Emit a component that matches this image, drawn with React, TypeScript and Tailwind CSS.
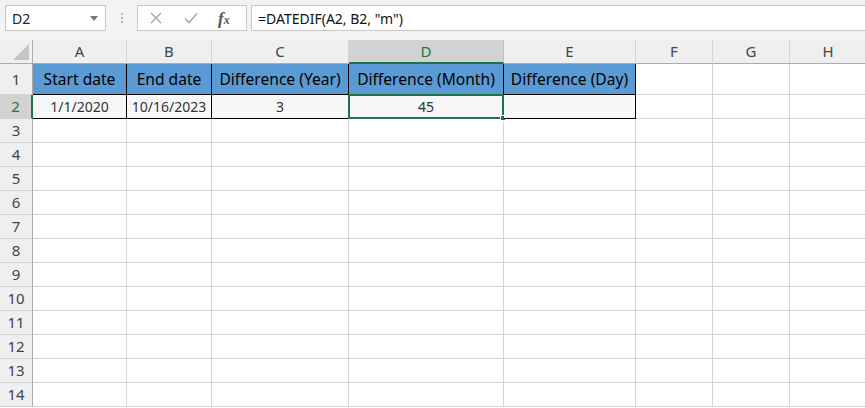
import React from "react";

const cols = [
  { id: "A", w: "w-[94px]" },
  { id: "B", w: "w-[85px]" },
  { id: "C", w: "w-[137px]" },
  { id: "D", w: "w-[155px]" },
  { id: "E", w: "w-[132px]" },
  { id: "F", w: "w-[77px]" },
  { id: "G", w: "w-[77px]" },
  { id: "H", w: "w-[77px]" },
];

const headers = [
  "Start date",
  "End date",
  "Difference (Year)",
  "Difference (Month)",
  "Difference (Day)",
];
const values = ["1/1/2020", "10/16/2023", "3", "45", ""];

const font = { fontFamily: '"Noto Sans", "Open Sans", sans-serif' };

function RowHeader({ n, h, selected }: { n: number; h: string; selected?: boolean }) {
  return (
    <div
      className={`${h} w-[33px] shrink-0 flex items-center justify-center text-[15px] border-b border-[#d4d4d4] ${
        selected
          ? "bg-[#d2d2d2] text-[#217346] border-r-2 border-r-[#217346]"
          : "bg-[#efefef] text-[#444] border-r border-r-[#ababab]"
      }`}
    >
      {n}
    </div>
  );
}

export default function App() {
  return (
    <div className="w-[865px] h-[408px] overflow-hidden bg-white text-black" style={font}>
      {/* formula bar */}
      <div className="h-[40px] bg-[#f3f3f3] flex items-start pt-[5px] pl-[5px]">
        <div className="w-[101px] h-[26px] bg-white border border-[#c6c6c6] flex items-center justify-between pl-[6px] pr-[7px] text-[14px] text-[#222]">
          <span>D2</span>
          <svg width="8" height="5" viewBox="0 0 8 5">
            <path d="M0 0h8L4 5z" fill="#777" />
          </svg>
        </div>
        <div className="w-[31px] h-[26px] flex flex-col items-center justify-center gap-[2px]">
          <div className="w-[2px] h-[2px] bg-[#b5b5b5]" />
          <div className="w-[2px] h-[2px] bg-[#b5b5b5]" />
          <div className="w-[2px] h-[2px] bg-[#b5b5b5]" />
        </div>
        <div className="w-[110px] h-[26px] bg-white border border-[#c6c6c6] flex items-center">
          <svg width="12" height="12" viewBox="0 0 12 12" className="ml-[12px]">
            <path d="M1 1l10 10M11 1L1 11" stroke="#a6a6a6" strokeWidth="1.3" />
          </svg>
          <svg width="14" height="12" viewBox="0 0 14 12" className="ml-[22px]">
            <path d="M1 6.5l4 4L13 1.5" stroke="#a6a6a6" strokeWidth="1.6" fill="none" />
          </svg>
          <span
            className="ml-[20px] text-[17px] leading-none text-[#555] italic font-bold"
            style={{ fontFamily: '"Liberation Serif", serif' }}
          >
            f<span className="text-[12px]">x</span>
          </span>
        </div>
        <div className="ml-[4px] flex-1 h-[26px] bg-white border border-[#c6c6c6] border-r-0 flex items-center pl-[6px] text-[14px] text-[#111]">
          =DATEDIF(A2, B2, "m")
        </div>
      </div>

      {/* column headers */}
      <div className="flex h-[24px]">
        <div className="w-[33px] shrink-0 bg-[#efefef] border-r border-b border-[#ababab] relative">
          <svg width="16" height="16" viewBox="0 0 16 16" className="absolute right-[3px] bottom-[3px]">
            <path d="M16 0V16H0z" fill="#c4c4c4" />
          </svg>
        </div>
        {cols.map((c) =>
          c.id === "D" ? (
            <div
              key={c.id}
              className={`${c.w} shrink-0 bg-[#d2d2d2] text-[#217346] border-r border-r-[#c0c0c0] border-b-2 border-b-[#217346] flex items-center justify-center text-[15px]`}
            >
              {c.id}
            </div>
          ) : (
            <div
              key={c.id}
              className={`${c.w} shrink-0 bg-[#efefef] text-[#444] border-r border-r-[#d4d4d4] border-b border-b-[#ababab] flex items-center justify-center text-[15px]`}
            >
              {c.id}
            </div>
          )
        )}
      </div>

      {/* row 1 */}
      <div className="flex h-[31px]">
        <RowHeader n={1} h="h-[31px]" />
        {cols.map((c, i) =>
          i < 5 ? (
            <div
              key={c.id}
              className={`${c.w} shrink-0 bg-[#5b9bd5] border-r border-b border-black flex items-center justify-center pt-[2px] text-[15.6px] whitespace-nowrap`}
            >
              {headers[i]}
            </div>
          ) : (
            <div key={c.id} className={`${c.w} shrink-0 border-r border-b border-[#d4d4d4]`} />
          )
        )}
      </div>

      {/* row 2 */}
      <div className="flex h-[24px]">
        <RowHeader n={2} h="h-[24px]" selected />
        {cols.map((c, i) =>
          i < 5 ? (
            <div
              key={c.id}
              className={`${c.w} shrink-0 bg-[#f7f7f7] border-r border-b border-black flex items-center justify-center text-[14px] text-[#333] relative`}
            >
              {values[i]}
              {c.id === "D" && (
                <div className="absolute -left-[1px] -top-[1px] -right-[1px] -bottom-[1px] border-2 border-[#217346]">
                  <div className="absolute -right-[4px] -bottom-[4px] w-[6px] h-[6px] bg-[#217346] border border-white" />
                </div>
              )}
            </div>
          ) : (
            <div key={c.id} className={`${c.w} shrink-0 border-r border-b border-[#d4d4d4]`} />
          )
        )}
      </div>

      {/* empty rows */}
      {Array.from({ length: 12 }, (_, k) => k + 3).map((n) => (
        <div key={n} className="flex h-[24px]">
          <RowHeader n={n} h="h-[24px]" />
          {cols.map((c) => (
            <div key={c.id} className={`${c.w} shrink-0 border-r border-b border-[#d4d4d4]`} />
          ))}
        </div>
      ))}
    </div>
  );
}
